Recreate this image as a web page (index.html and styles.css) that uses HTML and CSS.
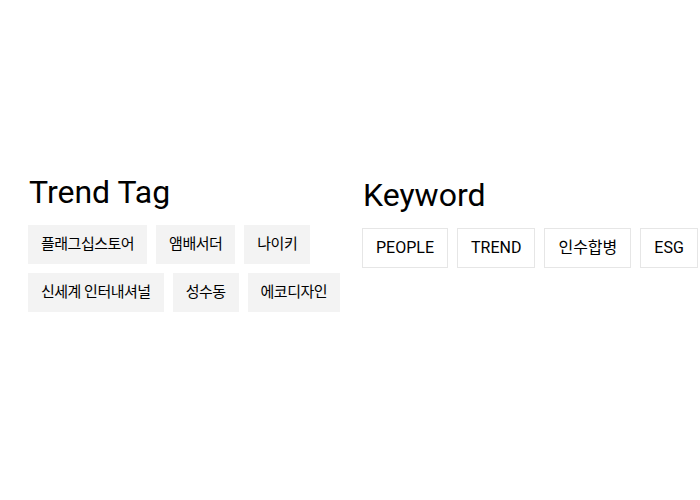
FILE: index.html
```html
<!DOCTYPE html>
<html lang="ko">
<head>
<meta charset="utf-8">
<title>Trend Tag</title>
<link rel="stylesheet" href="styles.css">
</head>
<body>
<div class="wrap">
  <section class="col col-trend">
    <h2 class="title">Trend Tag</h2>
    <ul class="tags">
      <li class="tag">플래그십스토어</li>
      <li class="tag">앰배서더</li>
      <li class="tag">나이키</li>
      <li class="tag">신세계 인터내셔널</li>
      <li class="tag">성수동</li>
      <li class="tag">에코디자인</li>
    </ul>
  </section>
  <section class="col col-key">
    <h2 class="title">Keyword</h2>
    <ul class="tags">
      <li class="tag tag-line">PEOPLE</li>
      <li class="tag tag-line">TREND</li>
      <li class="tag tag-line">인수합병</li>
      <li class="tag tag-line">ESG</li>
    </ul>
  </section>
</div>
</body>
</html>
```

FILE: styles.css
```css
html, body {
  margin: 0;
  padding: 0;
  background: #fff;
}
body {
  font-family: Roboto, "Noto Sans CJK KR", sans-serif;
  color: #111;
}
.wrap {
  display: flex;
  padding: 173px 0 0 28px;
}
.col-trend {
  width: 334px;
  flex: none;
}
.col-key {
  flex: 1;
  padding-top: 3px;
}
.title {
  margin: 0 0 14px 1px;
  font-size: 32px;
  line-height: 38px;
  font-weight: 400;
  color: #000;
}
.tags {
  list-style: none;
  margin: 0;
  padding: 0;
  display: flex;
  flex-wrap: wrap;
  gap: 9px;
}
.tag {
  background: #f3f3f3;
  font-size: 15px;
  letter-spacing: -0.5px;
  line-height: 19px;
  padding: 10px 13px;
  color: #000;
}
.tag-line {
  background: #fff;
  border: 1px solid #e6e6e6;
  font-size: 16px;
  letter-spacing: 0;
  line-height: 18px;
  padding: 10px 13px;
}
```
